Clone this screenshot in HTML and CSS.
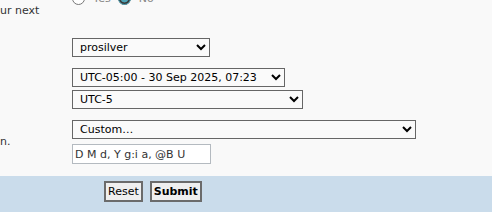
FILE: index.html
```html
<!DOCTYPE html>
<html lang="en">
<head>
    <meta charset="UTF-8">
    <meta name="viewport" content="width=device-width, initial-scale=1.0">
    <title>Board preferences</title>
    <link rel="stylesheet" href="styles.css">
</head>
<body>
    <form class="prefs">
        <div class="panel">
            <dl class="row row-radio">
                <dt>ur next</dt>
                <dd class="radios">
                    <label class="choice"><input type="radio" name="popup" value="1"> Yes</label>
                    <label class="choice"><input type="radio" name="popup" value="0" checked> No</label>
                </dd>
            </dl>

            <dl class="row row-style">
                <dt></dt>
                <dd>
                    <select class="field sel-style">
                        <option>prosilver</option>
                    </select>
                </dd>
            </dl>

            <dl class="row row-tz">
                <dt></dt>
                <dd class="stack">
                    <select class="field sel-date">
                        <option>UTC-05:00 - 30 Sep 2025, 07:23</option>
                    </select>
                    <select class="field sel-tz">
                        <option>UTC-5</option>
                    </select>
                </dd>
            </dl>

            <dl class="row row-format">
                <dt>n.</dt>
                <dd class="stack stack-wide">
                    <select class="field sel-format">
                        <option>Custom…</option>
                    </select>
                    <input class="inputbox" type="text" value="D M d, Y g:i a, @B U">
                </dd>
            </dl>
        </div>

        <div class="submit-buttons">
            <button class="button2" type="reset">Reset</button>
            <button class="button1" type="submit">Submit</button>
        </div>
    </form>
</body>
</html>
```

FILE: styles.css
```css
* {
    box-sizing: border-box;
    margin: 0;
    padding: 0;
}

html, body {
    height: 100%;
}

body {
    font-family: "DejaVu Sans", Verdana, sans-serif;
    font-size: 11px;
    line-height: 13px;
    color: #333;
    background: #cadceb;
    overflow: hidden;
}

.panel {
    display: flow-root;
    background: #f9f9f9;
    height: 176px;
}

.row {
    display: flex;
}

.row dt {
    width: 72px;
    flex-shrink: 0;
    white-space: nowrap;
    overflow: hidden;
}

.row dd {
    flex: 1;
}

.row-radio {
    margin-top: -8px;
}

.row-radio dt {
    padding-top: 12px;
}

.radios {
    display: flex;
    gap: 7px;
    align-items: center;
    height: 13px;
}

.choice {
    display: flex;
    align-items: center;
    gap: 8px;
    color: #888;
}

.choice input {
    margin: 0;
    width: 13px;
    height: 13px;
    accent-color: #4ca3b6;
}

.row-style {
    margin-top: 21px;
}

.row-tz {
    margin-top: 11px;
}

.row-format {
    margin-top: 11px;
}

.row-format dt {
    padding-top: 15px;
}

.stack {
    display: flex;
    flex-direction: column;
    align-items: flex-start;
    gap: 3px;
}

.stack-wide {
    gap: 5px;
}

.field {
    font-family: inherit;
    font-size: 11px;
    color: #000;
    background-color: #fafafa;
    border: 1px solid #666;
    height: 19px;
    padding: 0 2px 0 3px;
}

.sel-style {
    width: 138px;
}

.sel-date {
    width: 213px;
}

.sel-tz {
    width: 231px;
}

.sel-format {
    width: 344px;
}

.inputbox {
    font-family: inherit;
    font-size: 11px;
    color: #333;
    background: #fff;
    border: 1px solid #b4bac0;
    width: 139px;
    height: 20px;
    padding: 0 2px;
}

.submit-buttons {
    display: flex;
    gap: 7px;
    padding: 5px 0 0 104px;
}

.button1,
.button2 {
    font-family: inherit;
    font-size: 11px;
    line-height: 13px;
    color: #000;
    background: #efefef;
    border: 2px solid #6b6b6b;
    padding: 2px;
    height: 21px;
}

.button1 {
    font-weight: bold;
}
```
